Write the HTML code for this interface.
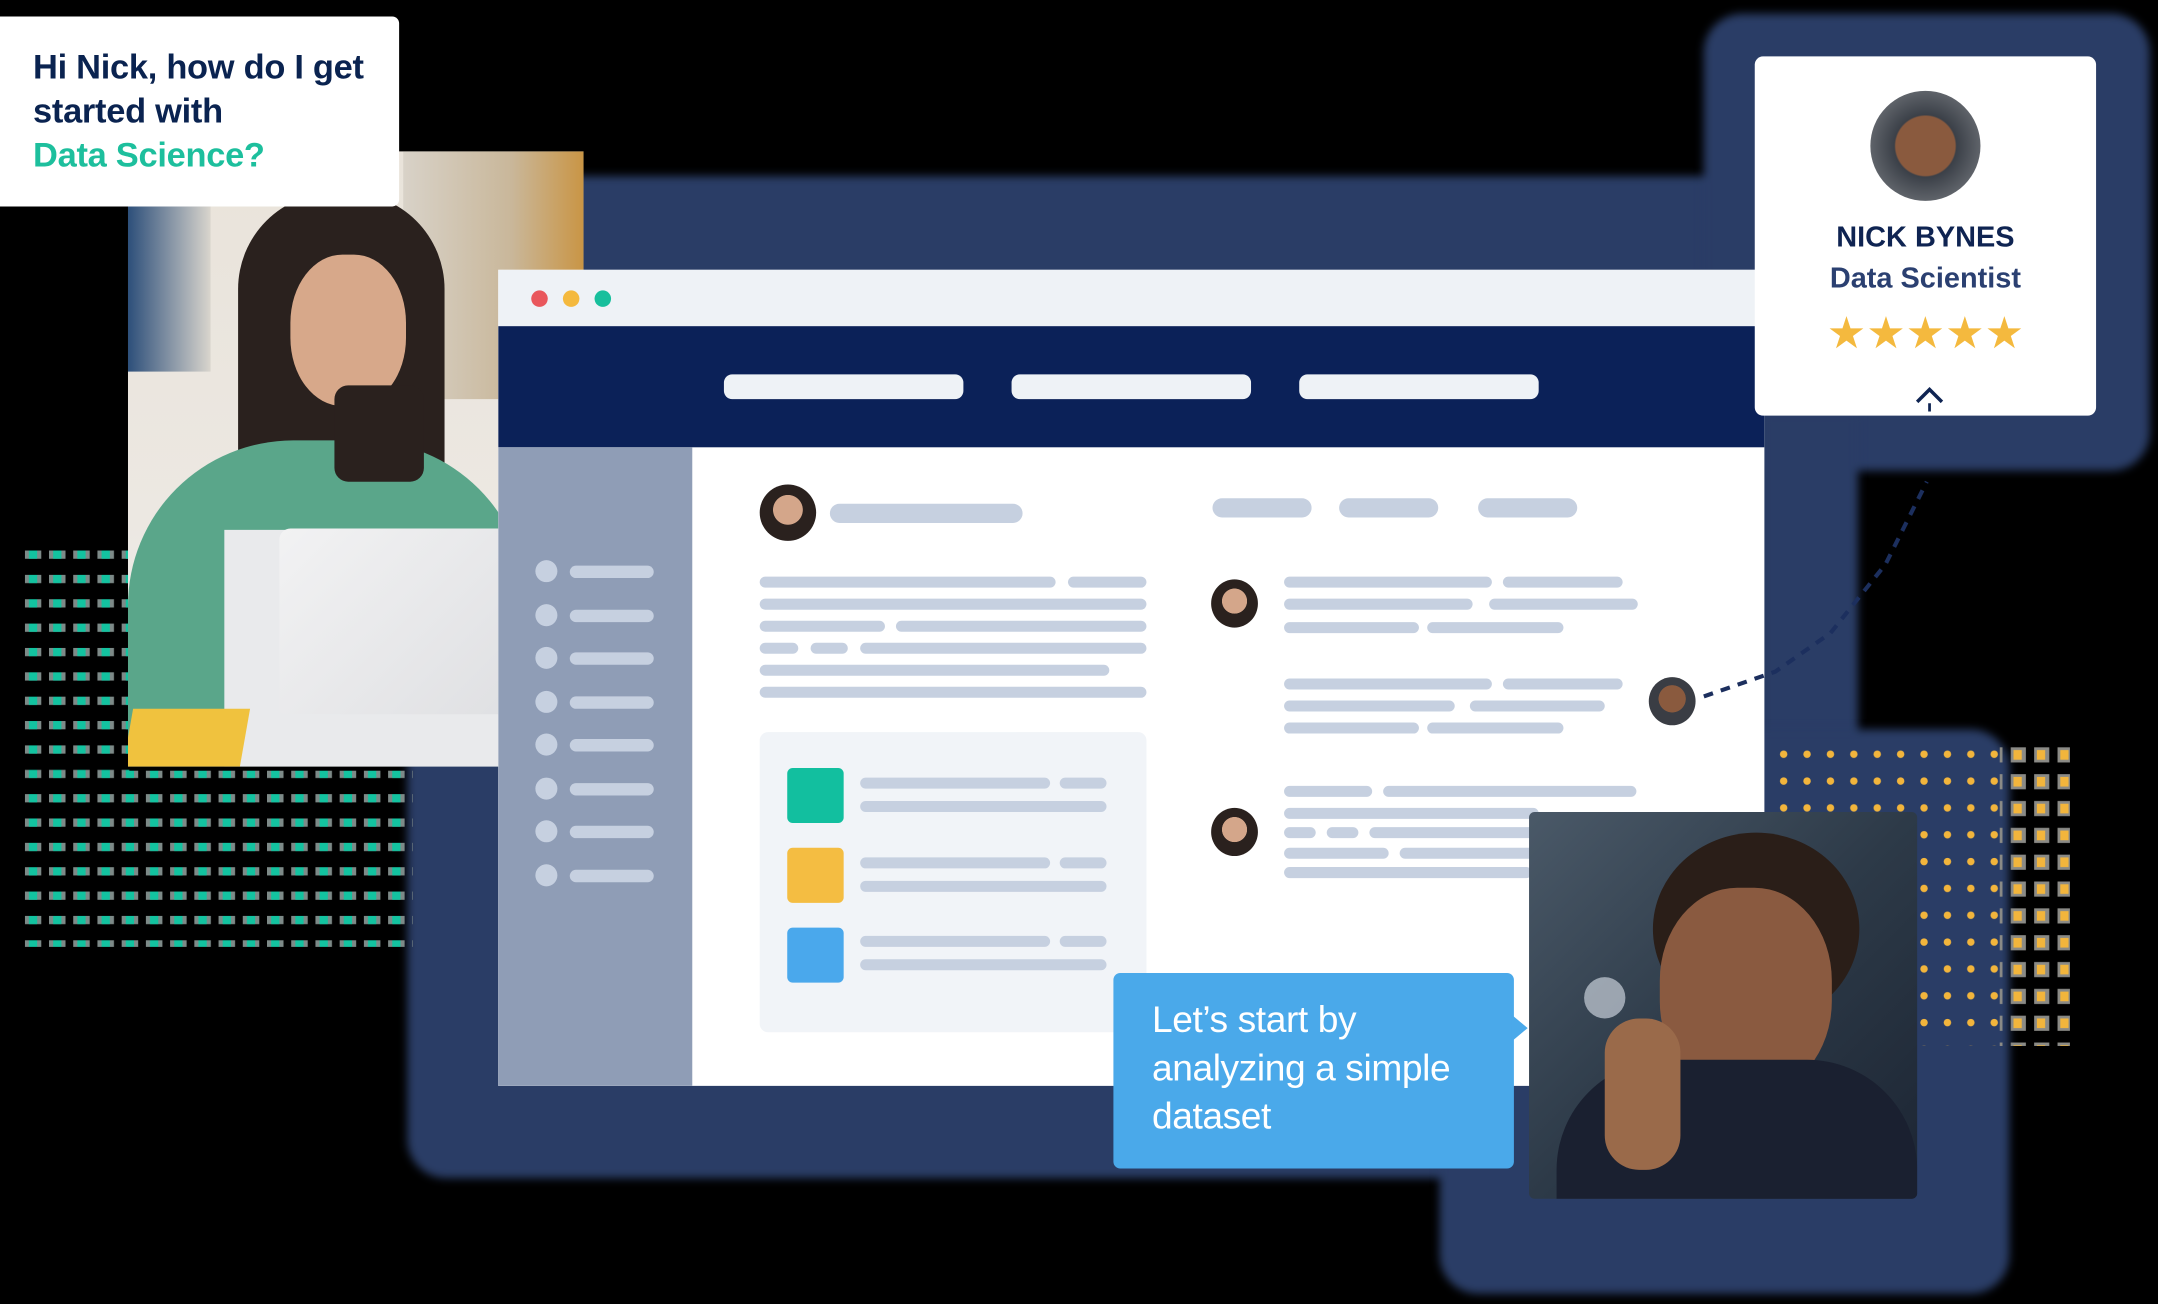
<!DOCTYPE html>
<html><head><meta charset="utf-8"><style>
html,body{margin:0;padding:0;background:#000;width:2158px;height:1304px;overflow:hidden}
#s{position:absolute;left:0;top:0;width:1568px;height:947px;transform:scale(1.37628);transform-origin:0 0;font-family:"Liberation Sans",sans-serif}
.a{position:absolute}
.p{position:absolute;background:#c6d0e0;border-radius:5px;height:8px}
.glow{position:absolute;background:#2a3d66;border-radius:28px;filter:blur(3px)}
.av{position:absolute;border-radius:50%;overflow:hidden}
</style></head><body><div id="s">
<!-- glows -->
<div class="glow" style="left:296px;top:128px;width:990px;height:728px"></div>
<div class="glow" style="left:1238px;top:10px;width:324px;height:332px"></div>
<div class="glow" style="left:1280px;top:300px;width:70px;height:260px;border-radius:0"></div>
<div class="glow" style="left:1046px;top:530px;width:414px;height:410px"></div>
<!-- green grid -->
<svg class="a" style="left:18px;top:400px" width="290" height="290">
<defs><pattern id="g" width="17.6" height="17.7" patternUnits="userSpaceOnUse"><rect x="0" y="0" width="12" height="6" fill="#7d8a88"/><rect x="3" y="0" width="6" height="6" fill="#13c3a0"/></pattern></defs>
<rect x="0" y="0" width="76" height="160" fill="url(#g)"/>
<rect x="0" y="160" width="282" height="128" fill="url(#g)"/>
</svg>
<!-- yellow dots -->
<svg class="a" style="left:1288px;top:540px" width="220" height="225">
<defs><pattern id="y" width="17" height="19.5" patternUnits="userSpaceOnUse"><circle cx="8" cy="8" r="2.7" fill="#f2b53c"/></pattern>
<pattern id="y2" width="17" height="19.5" patternUnits="userSpaceOnUse"><rect x="3" y="3" width="11" height="11" fill="#8a8a86"/><rect x="5" y="5" width="6" height="7" fill="#f2b53c"/></pattern></defs>
<rect x="0" y="0" width="165" height="220" fill="url(#y)"/>
<rect x="165" y="0" width="51" height="220" fill="url(#y2)"/>
</svg>
<!-- woman photo -->
<div class="a" style="left:93px;top:110px;width:331px;height:447px;overflow:hidden;background:linear-gradient(180deg,#e9e3da 0%,#ece8e2 60%,#f1f1f2 100%)">
 <div class="a" style="left:200px;top:0;width:131px;height:180px;background:linear-gradient(90deg,#d8d2c8,#c9b79a 60%,#c99545)"></div>
 <div class="a" style="left:0;top:40px;width:60px;height:120px;background:linear-gradient(90deg,#2d4f7a,#d9d5cd)"></div>
 <div class="a" style="left:80px;top:30px;width:150px;height:300px;border-radius:70px 70px 20px 20px;background:#2a211e"></div>
 <div class="a" style="left:118px;top:75px;width:84px;height:110px;border-radius:45%;background:#d7a88a"></div>
 <div class="a" style="left:0;top:210px;width:290px;height:237px;border-radius:120px 120px 0 0;background:#5aa68a"></div>
 <div class="a" style="left:150px;top:170px;width:65px;height:70px;background:#2a211e;border-radius:10px"></div>
 <div class="a" style="left:70px;top:275px;width:261px;height:172px;background:#e9eaec"></div>
 <div class="a" style="left:110px;top:274px;width:221px;height:135px;background:linear-gradient(135deg,#f2f2f3,#dcdde0);border-radius:8px 0 0 4px"></div>
 <div class="a" style="left:0;top:405px;width:85px;height:42px;background:#f0c23e;transform:skewX(-10deg)"></div>
</div>
<!-- question card -->
<div class="a" style="left:0;top:12px;width:290px;height:138px;background:#fff;border-radius:0 5px 5px 0"></div>
<div class="a" style="left:24px;top:33px;font-size:25px;line-height:32px;font-weight:bold;color:#0a2350;letter-spacing:-.2px">Hi Nick, how do I get<br>started with<br><span style="color:#1dbf9d">Data Science?</span></div>
<!-- browser -->
<div class="a" style="left:362px;top:196px;width:920px;height:593px;background:#fff;overflow:hidden">
 <div class="a" style="left:0;top:0;width:920px;height:41px;background:#eef2f6"></div>
 <div class="a" style="left:24px;top:15px;width:12px;height:12px;border-radius:50%;background:#e9575c"></div>
 <div class="a" style="left:47px;top:15px;width:12px;height:12px;border-radius:50%;background:#f4b93e"></div>
 <div class="a" style="left:70px;top:15px;width:12px;height:12px;border-radius:50%;background:#17bf9c"></div>
 <div class="a" style="left:0;top:41px;width:920px;height:88px;background:#0b2158"></div>
 <div class="a" style="left:164px;top:76px;width:174px;height:18px;border-radius:6px;background:#eef2f6"></div>
 <div class="a" style="left:373px;top:76px;width:174px;height:18px;border-radius:6px;background:#eef2f6"></div>
 <div class="a" style="left:582px;top:76px;width:174px;height:18px;border-radius:6px;background:#eef2f6"></div>
 <div class="a" style="left:0;top:129px;width:141px;height:464px;background:#8f9db6"></div>
</div>
<!-- sidebar items -->
<div class="a" style="left:389px;top:407px">
 <div style="position:relative">
 <div class="a" style="left:0;top:0;width:16px;height:16px;border-radius:50%;background:#c6d0e0"></div><div class="a" style="left:25px;top:4px;width:61px;height:9px;border-radius:5px;background:#c6d0e0"></div>
 <div class="a" style="left:0;top:31.5px;width:16px;height:16px;border-radius:50%;background:#c6d0e0"></div><div class="a" style="left:25px;top:35.5px;width:61px;height:9px;border-radius:5px;background:#c6d0e0"></div>
 <div class="a" style="left:0;top:63px;width:16px;height:16px;border-radius:50%;background:#c6d0e0"></div><div class="a" style="left:25px;top:67px;width:61px;height:9px;border-radius:5px;background:#c6d0e0"></div>
 <div class="a" style="left:0;top:94.5px;width:16px;height:16px;border-radius:50%;background:#c6d0e0"></div><div class="a" style="left:25px;top:98.5px;width:61px;height:9px;border-radius:5px;background:#c6d0e0"></div>
 <div class="a" style="left:0;top:126px;width:16px;height:16px;border-radius:50%;background:#c6d0e0"></div><div class="a" style="left:25px;top:130px;width:61px;height:9px;border-radius:5px;background:#c6d0e0"></div>
 <div class="a" style="left:0;top:157.5px;width:16px;height:16px;border-radius:50%;background:#c6d0e0"></div><div class="a" style="left:25px;top:161.5px;width:61px;height:9px;border-radius:5px;background:#c6d0e0"></div>
 <div class="a" style="left:0;top:189px;width:16px;height:16px;border-radius:50%;background:#c6d0e0"></div><div class="a" style="left:25px;top:193px;width:61px;height:9px;border-radius:5px;background:#c6d0e0"></div>
 <div class="a" style="left:0;top:220.5px;width:16px;height:16px;border-radius:50%;background:#c6d0e0"></div><div class="a" style="left:25px;top:224.5px;width:61px;height:9px;border-radius:5px;background:#c6d0e0"></div>
 </div></div>
<!-- left column -->
<div class="av" style="left:552px;top:352px;width:41px;height:41px;background:radial-gradient(circle at 50% 45%,#d4a68a 0 35%,#2a211e 36%)"></div>
<div class="p" style="left:603px;top:366px;width:140px;height:14px;border-radius:7px"></div>
<div class="p" style="left:552px;top:419px;width:215px"></div><div class="p" style="left:776px;top:419px;width:57px"></div>
<div class="p" style="left:552px;top:435px;width:281px"></div>
<div class="p" style="left:552px;top:451px;width:91px"></div><div class="p" style="left:651px;top:451px;width:182px"></div>
<div class="p" style="left:552px;top:467px;width:28px"></div><div class="p" style="left:589px;top:467px;width:27px"></div><div class="p" style="left:625px;top:467px;width:208px"></div>
<div class="p" style="left:552px;top:483px;width:254px"></div>
<div class="p" style="left:552px;top:499px;width:281px"></div>
<div class="a" style="left:552px;top:532px;width:281px;height:218px;background:#f1f4f8;border-radius:6px"></div>
<div class="a" style="left:572px;top:558px;width:41px;height:40px;border-radius:4px;background:#12bf9f"></div>
<div class="a" style="left:572px;top:616px;width:41px;height:40px;border-radius:4px;background:#f4bd42"></div>
<div class="a" style="left:572px;top:674px;width:41px;height:40px;border-radius:4px;background:#4aa8ec"></div>
<div class="p" style="left:625px;top:565px;width:138px"></div><div class="p" style="left:770px;top:565px;width:34px"></div><div class="p" style="left:625px;top:582px;width:179px"></div>
<div class="p" style="left:625px;top:623px;width:138px"></div><div class="p" style="left:770px;top:623px;width:34px"></div><div class="p" style="left:625px;top:640px;width:179px"></div>
<div class="p" style="left:625px;top:680px;width:138px"></div><div class="p" style="left:770px;top:680px;width:34px"></div><div class="p" style="left:625px;top:697px;width:179px"></div>
<!-- right column -->
<div class="p" style="left:881px;top:362px;width:72px;height:14px;border-radius:7px"></div>
<div class="p" style="left:973px;top:362px;width:72px;height:14px;border-radius:7px"></div>
<div class="p" style="left:1074px;top:362px;width:72px;height:14px;border-radius:7px"></div>
<div class="av" style="left:880px;top:421px;width:34px;height:35px;background:radial-gradient(circle at 50% 45%,#d4a68a 0 35%,#2a211e 36%)"></div>
<div class="p" style="left:933px;top:419px;width:151px"></div><div class="p" style="left:1092px;top:419px;width:87px"></div>
<div class="p" style="left:933px;top:435px;width:137px"></div><div class="p" style="left:1082px;top:435px;width:108px"></div>
<div class="p" style="left:933px;top:452px;width:98px"></div><div class="p" style="left:1037px;top:452px;width:99px"></div>
<div class="p" style="left:933px;top:493px;width:151px"></div><div class="p" style="left:1092px;top:493px;width:87px"></div>
<div class="p" style="left:933px;top:509px;width:124px"></div><div class="p" style="left:1068px;top:509px;width:98px"></div>
<div class="p" style="left:933px;top:525px;width:98px"></div><div class="p" style="left:1037px;top:525px;width:99px"></div>
<div class="av" style="left:1198px;top:492px;width:34px;height:35px;background:radial-gradient(circle at 50% 45%,#8a5a3e 0 38%,#3a3d44 39%)"></div>
<div class="av" style="left:880px;top:587px;width:34px;height:35px;background:radial-gradient(circle at 50% 45%,#d4a68a 0 35%,#2a211e 36%)"></div>
<div class="p" style="left:933px;top:571px;width:64px"></div><div class="p" style="left:1005px;top:571px;width:184px"></div>
<div class="p" style="left:933px;top:587px;width:185px"></div>
<div class="p" style="left:933px;top:601px;width:23px"></div><div class="p" style="left:964px;top:601px;width:23px"></div><div class="p" style="left:995px;top:601px;width:120px"></div>
<div class="p" style="left:933px;top:616px;width:76px"></div><div class="p" style="left:1017px;top:616px;width:100px"></div>
<div class="p" style="left:933px;top:630px;width:180px"></div>
<!-- dashed connector -->
<svg class="a" style="left:1230px;top:340px" width="180" height="180"><path d="M8 166 L60 148 L100 120 L140 70 L170 10" fill="none" stroke="#1c2f5e" stroke-width="3" stroke-dasharray="7 6"/></svg>
<!-- man photo -->
<div class="a" style="left:1111px;top:590px;width:282px;height:281px;border-radius:4px;overflow:hidden;background:linear-gradient(135deg,#4a5968 0%,#2d3a48 50%,#1c2533 100%)">
 <div class="a" style="left:40px;top:120px;width:30px;height:30px;border-radius:50%;background:#c8ced8;opacity:.7"></div>
 <div class="a" style="left:90px;top:15px;width:150px;height:140px;border-radius:50%;background:#2a1e18"></div>
 <div class="a" style="left:95px;top:55px;width:125px;height:150px;border-radius:45%;background:#8a5a40"></div>
 <div class="a" style="left:20px;top:180px;width:262px;height:120px;border-radius:80px 80px 0 0;background:#1a2030"></div>
 <div class="a" style="left:55px;top:150px;width:55px;height:110px;border-radius:25px;background:#9a6a4a"></div>
</div>
<!-- speech bubble -->
<div class="a" style="left:809px;top:707px;width:291px;height:142px;background:#4aa9ea;border-radius:5px"></div>
<div class="a" style="left:1098px;top:737px;width:0;height:0;border-top:10px solid transparent;border-bottom:10px solid transparent;border-left:12px solid #4aa9ea"></div>
<div class="a" style="left:837px;top:724px;font-size:27px;line-height:35px;color:#fff;font-weight:500;letter-spacing:-.3px">Let’s start by<br>analyzing a simple<br>dataset</div>
<!-- profile card -->
<div class="a" style="left:1275px;top:41px;width:248px;height:261px;background:#fff;border-radius:6px"></div>
<div class="av" style="left:1359px;top:66px;width:80px;height:80px;background:radial-gradient(ellipse at 50% 50%,#8a5a3e 0 38%,#3b4048 40%,#6a6e74 80%)"></div>
<div class="a" style="left:1275px;top:161px;width:248px;text-align:center;font-size:21px;font-weight:bold;color:#0f2452">NICK BYNES</div>
<div class="a" style="left:1275px;top:191px;width:248px;text-align:center;font-size:21px;font-weight:bold;color:#2b4071">Data Scientist</div>
<div class="a" style="left:1275px;top:224px;width:248px;text-align:center;font-size:32px;color:#f4b93e;line-height:36px">★★★★★</div>
<svg class="a" style="left:1390px;top:279px" width="24" height="22"><path d="M3 13 L12 4 L21 13" fill="none" stroke="#0f2452" stroke-width="2.5"/><path d="M12 14 V20" stroke="#0f2452" stroke-width="2"/></svg>
</div></body></html>
